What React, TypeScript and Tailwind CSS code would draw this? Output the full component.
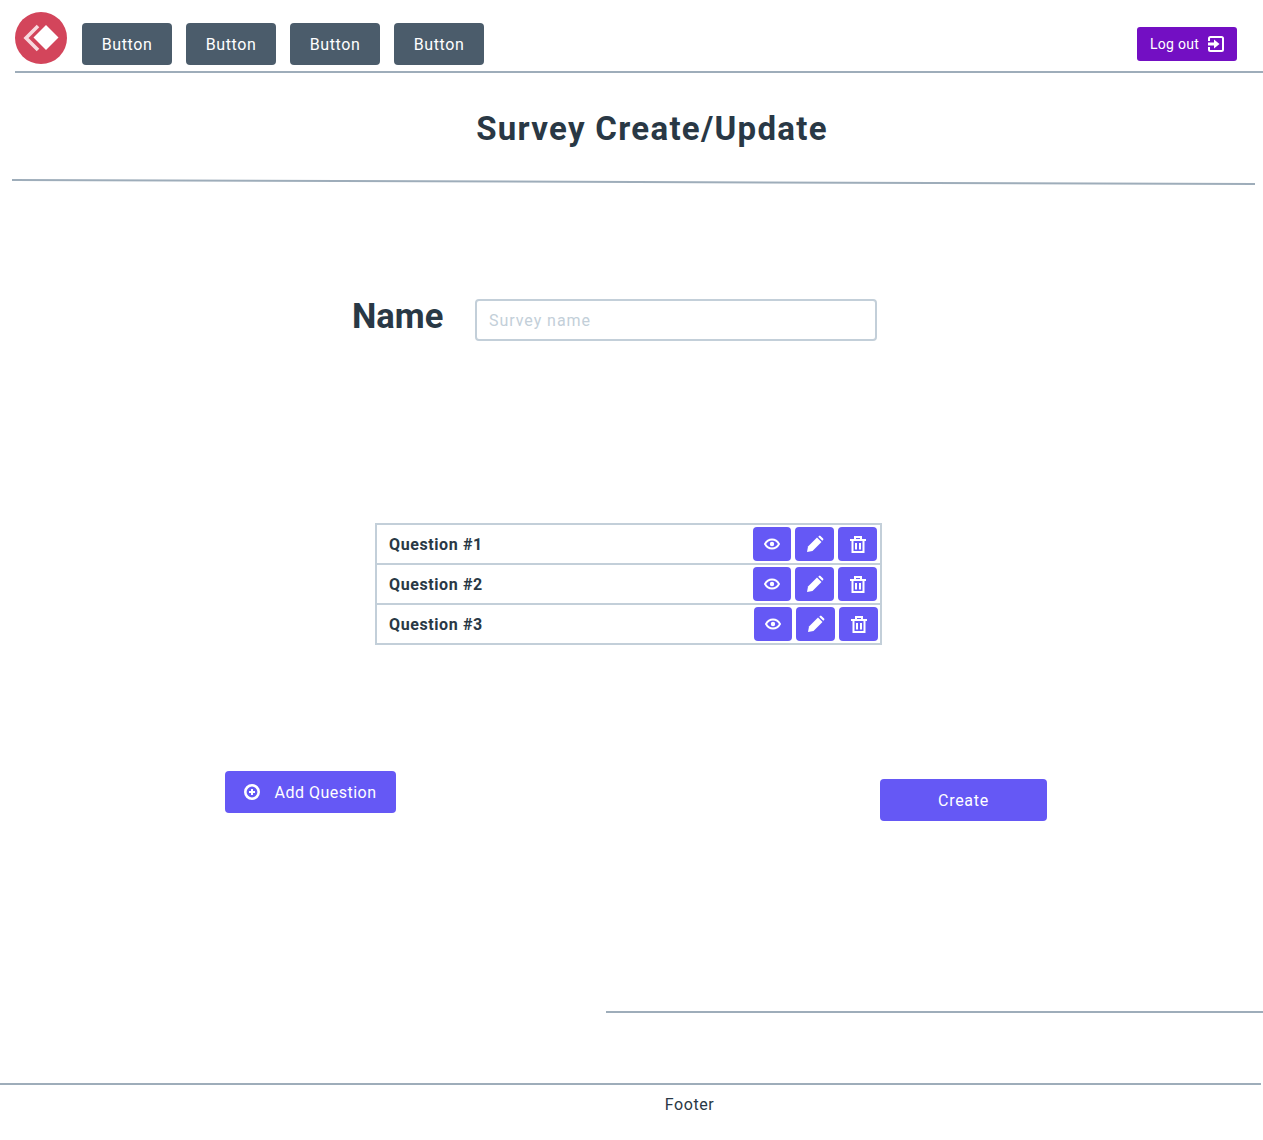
const font = "font-['Roboto',sans-serif]";

function EyeIcon() {
  return (
    <svg width="16" height="16" viewBox="0 0 16 16" fill="none">
      <path d="M1 8c1.600-3 4-4.500 7-4.500S13.400 5 15 8c-1.600 3-4 4.500-7 4.500S2.600 11 1 8z" stroke="white" strokeWidth="1.900" />
      <circle cx="8" cy="8" r="2.200" fill="white" />
    </svg>
  );
}

function PencilIcon() {
  return (
    <svg width="18" height="18" viewBox="0 0 18 18" fill="white">
      <path d="M1 17l1-5.500L11 2.500l4.500 4.500L6.500 16z" />
      <path d="M12.200 1.700l.9-.8a1 1 0 0 1 1.400 0l2.600 2.600a1 1 0 0 1 0 1.400l-.8.900z" />
    </svg>
  );
}

function TrashIcon() {
  return (
    <svg width="16" height="17" viewBox="0 0 16 17" fill="none" stroke="white" strokeWidth="2">
      <path d="M0 4h16M5 4V1h6v3M2.500 4v12h11V4M6 7v6.500M10 7v6.500" />
    </svg>
  );
}

function LoginIcon() {
  return (
    <svg width="16" height="16" viewBox="0 0 16 16" fill="none">
      <path d="M1 5V2.500A1.500 1.500 0 0 1 2.500 1h11A1.500 1.500 0 0 1 15 2.500v11a1.500 1.500 0 0 1-1.500 1.500h-11A1.500 1.500 0 0 1 1 13.500V11" stroke="white" strokeWidth="2" />
      <path d="M0 6.500h6V3.500L11.500 8 6 12.500v-3H0z" fill="white" />
    </svg>
  );
}

function PlusCircleIcon() {
  return (
    <svg width="16" height="16" viewBox="0 0 16 16" fill="none" stroke="white">
      <circle cx="8" cy="8" r="6.700" strokeWidth="2.600" />
      <path d="M8 5v6M5 8h6" strokeWidth="2" />
    </svg>
  );
}

function Logo() {
  return (
    <div className="flex h-[52px] w-[52px] shrink-0 items-center justify-center rounded-full bg-[#d3455b]">
      <svg width="36" height="28" viewBox="0 0 36 28">
        <path d="M15 2L3 14l12 12" fill="none" stroke="#f8d9de" strokeWidth="3.600" />
        <path d="M23 1l12.500 12.500L23 26 10.500 13.500z" fill="white" />
      </svg>
    </div>
  );
}

function NavButton() {
  return (
    <button className="h-[42px] w-[90px] rounded bg-[#4b5c6b] pt-px text-base tracking-[0.6px] text-white">
      Button
    </button>
  );
}

function IconButton({ width, children }: { width: string; children: React.ReactNode }) {
  return (
    <button className={`flex h-[34px] items-center justify-center rounded bg-[#6558f5] ${width}`}>
      {children}
    </button>
  );
}

function QuestionRow({ title, last, shifted }: { title: string; last?: boolean; shifted?: boolean }) {
  return (
    <div
      className={`flex items-center justify-between pl-3 ${shifted ? "pr-[2px]" : "pr-[3px]"} ${
        last ? "h-[38px]" : "h-10 border-b-2 border-[#c3cfd9]"
      }`}
    >
      <span className="pt-[2px] text-base font-bold tracking-[0.6px] text-[#293845]">{title}</span>
      <div className="flex gap-1">
        <IconButton width="w-[38px]">
          <EyeIcon />
        </IconButton>
        <IconButton width="w-[39px]">
          <PencilIcon />
        </IconButton>
        <IconButton width="w-[39px]">
          <TrashIcon />
        </IconButton>
      </div>
    </div>
  );
}

export default function App() {
  return (
    <div className={`flex h-[1140px] flex-col bg-white ${font}`}>
      <header className="ml-[15px] flex h-[73px] items-start border-b-2 border-[#9eadba] pt-3">
        <Logo />
        <nav className="ml-[15px] mt-[11px] flex gap-[14px]">
          <NavButton />
          <NavButton />
          <NavButton />
          <NavButton />
        </nav>
        <button className="ml-auto mr-[26px] mt-[15px] flex h-[34px] w-[100px] items-center justify-center gap-[9px] rounded-[3px] bg-[#730fc3] text-sm tracking-[0.3px] text-white">
          Log out
          <LoginIcon />
        </button>
      </header>

      <h1 className="mt-[34px] ml-[41px] text-center text-[33px] leading-[44px] font-bold tracking-[1.3px] text-[#293845]">
        Survey Create/Update
      </h1>
      <div className="ml-3 mr-2 mt-[30px] h-[2px] rotate-[0.18deg] bg-[#9eadba]" />

      <section className="mt-[116px] ml-[352px] flex items-start">
        <label className="w-[123px] text-[34.500px] leading-[34px] font-bold text-[#293845]">Name</label>
        <input
          placeholder="Survey name"
          className="h-[42px] w-[402px] rounded border-2 border-[#c3cfd9] px-3 text-base tracking-[0.95px] text-[#293845] outline-none placeholder:text-[#c3cfd9]"
        />
      </section>

      <section className="mt-[182px] ml-[375px] w-[507px] border-2 border-[#c3cfd9]">
        <QuestionRow title="Question #1" />
        <QuestionRow title="Question #2" />
        <QuestionRow title="Question #3" last shifted />
      </section>

      <section className="mt-[126px] flex items-start">
        <button className="ml-[225px] flex h-[42px] w-[171px] items-center justify-center gap-[14px] rounded bg-[#6558f5] text-base tracking-[0.5px] text-white">
          <PlusCircleIcon />
          <span className="pt-[2px]">Add Question</span>
        </button>
        <button className="ml-[484px] mt-2 h-[42px] w-[167px] rounded bg-[#6558f5] pt-[2px] text-base tracking-[0.7px] text-white">
          Create
        </button>
      </section>

      <div className="mt-[190px] ml-[606px] h-[2px] bg-[#9eadba]" />

      <footer className="mt-[70px] mr-[2px] border-t-2 border-[#9eadba] pt-2 pl-[118px] text-center text-base leading-6 tracking-[0.6px] text-[#293845]">
        Footer
      </footer>
    </div>
  );
}
